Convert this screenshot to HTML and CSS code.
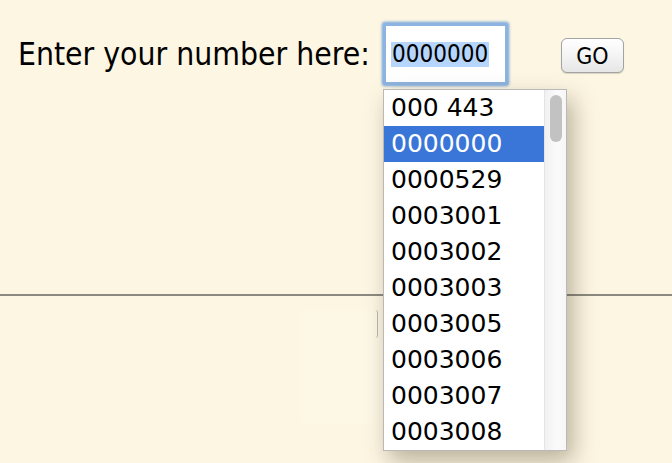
FILE: index.html
```html
<!DOCTYPE html>
<html>
<head>
<link rel="stylesheet" href="styles.css">
</head>

<body>
    <div class="entry">
        <label class="entry-label">Enter your number here:</label>
        <div class="entry-input"><span class="selected-text">0000000</span></div>
        <button class="go-button">GO</button>
    </div>
    <div class="divider"></div>
    <div class="lower">
        <div class="hidden-panel"><div class="hidden-button"></div></div>
    </div>

    <!-- autocomplete popup over the page -->
    <div class="suggest">
        <ul class="suggest-list">
            <li>000 443</li>
            <li class="active">0000000</li>
            <li>0000529</li>
            <li>0003001</li>
            <li>0003002</li>
            <li>0003003</li>
            <li>0003005</li>
            <li>0003006</li>
            <li>0003007</li>
            <li>0003008</li>
        </ul>
        <div class="suggest-scroll"><div class="suggest-thumb"></div></div>
    </div>
</body>

</html>
```

FILE: styles.css
```css
body {
    margin: 0;
    background-color: #fdf6e3;
    font-family: "DejaVu Sans Condensed", "DejaVu Sans", sans-serif;
    color: #000000;
}

.entry {
    height: 294px;
    box-sizing: border-box;
    padding: 23px 0 0 18px;
    display: flex;
    align-items: flex-start;
}

.entry-label {
    font-size: 31.6px;
    line-height: 62px;
    width: 365px;
    white-space: nowrap;
}

.entry-input {
    width: 125px;
    height: 62px;
    box-sizing: border-box;
    border: 3px solid #8db4e0;
    box-shadow: 0 0 3px 1px #6c9ed8;
    border-radius: 2px;
    background-color: #ffffff;
    padding: 0 0 0 5px;
    display: flex;
    align-items: center;
}

.selected-text {
    font-size: 24px;
    line-height: 25px;
    background-color: #b5d5fc;
    padding: 0 1px;
}

.go-button {
    margin: 15px 0 0 53px;
    width: 63px;
    height: 35px;
    border: 1px solid #a3a3a3;
    border-radius: 6px;
    background-image: linear-gradient(180deg, #ffffff 0%, #f4f4f4 50%, #e6e6e6 100%);
    box-shadow: 0 1px 1px rgba(0, 0, 0, 0.15);
    font-family: "DejaVu Sans Condensed", "DejaVu Sans", sans-serif;
    font-size: 23px;
    color: #000000;
    padding: 0;
}

.divider {
    height: 2px;
    background-color: #8b8981;
}

.lower {
    padding: 14px 0 0 300px;
}

.hidden-panel {
    width: 78px;
    height: 113px;
    background-color: #fdf7e6;
    position: relative;
}

.hidden-button {
    position: absolute;
    right: 0;
    top: 0;
    width: 2px;
    height: 28px;
    border-right: 1px solid #b8b8b8;
    border-radius: 0 3px 3px 0;
}

.suggest {
    position: absolute;
    left: 383px;
    top: 89px;
    width: 184px;
    height: 362px;
    box-sizing: border-box;
    border: 1px solid #b9b9b9;
    background-color: #ffffff;
    display: flex;
    box-shadow: 6px 10px 22px rgba(60, 50, 20, 0.35);
}

.suggest-list {
    list-style: none;
    margin: 0;
    padding: 0;
    width: 160px;
    font-family: "DejaVu Sans", sans-serif;
    font-size: 25px;
}

.suggest-list li {
    height: 36px;
    line-height: 36px;
    padding-left: 7px;
}

.suggest-list li.active {
    background-color: #3a76d8;
    color: #ffffff;
}

.suggest-scroll {
    flex: 1;
    border-left: 1px solid #e4e4e4;
    background-image: linear-gradient(90deg, #f1f1f1 0%, #fbfbfb 60%, #f6f6f6 100%);
    padding: 5px 0 0 5px;
}

.suggest-thumb {
    width: 12px;
    height: 47px;
    border-radius: 6px;
    background-color: #c2c2c2;
}
```
